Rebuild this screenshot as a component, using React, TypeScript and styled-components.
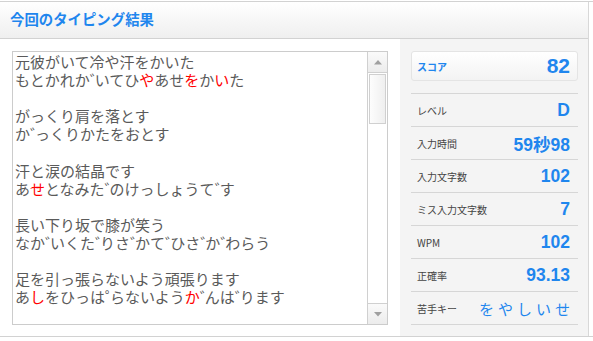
import React from "react";
import styled, { createGlobalStyle } from "styled-components";

const Global = createGlobalStyle`
  html, body { margin: 0; padding: 0; background: #fff; }
  body { font-family: "Noto Sans CJK JP", "Liberation Sans", sans-serif; }
`;

const BLUE = "#1f86ee";

const Frame = styled.div`
  margin-top: 1px;
  border-top: 1px solid #d2d2d2;
  border-bottom: 1px solid #d2d2d2;
  width: 593px;
  box-sizing: border-box;
`;

const Inner = styled.div`
  width: 589px;
  border-right: 1px solid #d8d8d8;
  box-sizing: border-box;
  display: flex;
  flex-direction: column;
`;

const Header = styled.div`
  height: 36px;
  border-bottom: 1px solid #d2d2d2;
  background: linear-gradient(#ffffff, #efefef);
  display: flex;
  align-items: center;
  padding-left: 10px;
`;

const Title = styled.h1`
  margin: 0;
  font-family: "Noto Sans CJK JP", sans-serif;
  font-size: 14.4px;
  font-weight: 700;
  color: ${BLUE};
  line-height: 1;
  padding-bottom: 1px;
`;

const Body = styled.div`
  display: flex;
  height: 297px;
`;

const Left = styled.div`
  width: 400px;
  box-sizing: border-box;
  padding: 12px 12px 11px 12px;
  background: #fff;
`;

const TextBox = styled.div`
  width: 376px;
  height: 274px;
  box-sizing: border-box;
  border: 1px solid #cccccc;
  display: flex;
`;

const TextContent = styled.div`
  flex: 1;
  overflow: hidden;
  padding: 1px 0 0 2px;
  font-family: "Noto Sans CJK JP", sans-serif;
  font-size: 15px;
  line-height: 18.1px;
  color: #5a5a5a;
  white-space: nowrap;
`;

const Line = styled.div`
  height: 18.1px;
`;

const Red = styled.span`
  color: #ff0000;
`;

const Mark = styled.span`
  letter-spacing: -10px;
  margin-right: 0;
`;

const ScrollBar = styled.div`
  width: 19px;
  border-left: 1px solid #d0d0d0;
  display: flex;
  flex-direction: column;
`;

const ScrollBtn = styled.div<{ $down?: boolean }>`
  height: 20px;
  background: linear-gradient(#fafafa, #ececec);
  ${(p) => (p.$down ? "border-top: 1px solid #d0d0d0;" : "border-bottom: 1px solid #d0d0d0;")}
  display: flex;
  align-items: center;
  justify-content: center;
`;

const Track = styled.div`
  flex: 1;
  padding: 1px 1px 0 1px;
`;

const Thumb = styled.div`
  height: 48px;
  border: 1px solid #d0d0d0;
  background: linear-gradient(90deg, #fdfdfd, #efefef);
`;

const Right = styled.div`
  width: 188px;
  box-sizing: border-box;
  background: #f4f4f4;
  padding: 12px 10px 0 11px;
  display: flex;
  flex-direction: column;
`;

const ScoreCard = styled.div`
  height: 30px;
  box-sizing: border-box;
  border: 1px solid #e4e4e4;
  border-radius: 3px;
  background: linear-gradient(#ffffff, #f3f3f3);
  display: flex;
  align-items: center;
  justify-content: space-between;
  padding: 0 7px 0 5px;
  margin-bottom: 12px;
`;

const ScoreLabel = styled.span`
  font-family: "Noto Sans CJK JP", sans-serif;
  font-size: 10px;
  font-weight: 700;
  color: ${BLUE};
`;

const ScoreValue = styled.span`
  font-family: "Liberation Sans", sans-serif;
  font-size: 21px;
  font-weight: 700;
  color: ${BLUE};
`;

const Row = styled.div<{ $last?: boolean }>`
  height: 33px;
  box-sizing: border-box;
  border-top: 1px solid #d6d6d6;
  ${(p) => (p.$last ? "border-bottom: 1px solid #d6d6d6; height: 34px;" : "")}
  display: flex;
  align-items: center;
  justify-content: space-between;
  padding: 0 8px 0 6px;
`;

const Label = styled.span`
  font-family: "Noto Sans CJK JP", "Liberation Sans", sans-serif;
  font-size: 10px;
  color: #444;
`;

const Value = styled.span`
  font-family: "Liberation Sans", "Noto Sans CJK JP", sans-serif;
  font-size: 17.5px;
  font-weight: 700;
  color: ${BLUE};
`;

const KeysValue = styled.span`
  font-family: "Noto Sans CJK JP", sans-serif;
  font-size: 15px;
  letter-spacing: 4px;
  margin-right: -4px;
  color: ${BLUE};
`;

const Tri = ({ down }: { down?: boolean }) => (
  <svg width="8" height="5" viewBox="0 0 8 5">
    <polygon points={down ? "0,0 8,0 4,4.5" : "0,4.5 8,4.5 4,0"} fill="#a0a0a0" />
  </svg>
);

function renderLine(src: string) {
  const out: React.ReactNode[] = [];
  let buf = "";
  let red = false;
  let k = 0;
  const flush = () => {
    if (buf) {
      out.push(red ? <Red key={k++}>{buf}</Red> : <React.Fragment key={k++}>{buf}</React.Fragment>);
      buf = "";
    }
  };
  for (const ch of src) {
    if (ch === "[") {
      flush();
      red = true;
    } else if (ch === "]") {
      flush();
      red = false;
    } else if (ch === "゛" || ch === "゜") {
      flush();
      out.push(<Mark key={k++}>{ch}</Mark>);
    } else {
      buf += ch;
    }
  }
  flush();
  return out;
}

const lines = [
  "元彼がいて冷や汗をかいた",
  "もとかれか゛いてひ[や]あせ[を]か[い]た",
  "",
  "がっくり肩を落とす",
  "か゛っくりかたをおとす",
  "",
  "汗と涙の結晶です",
  "あ[せ]となみた゛のけっしょうて゛す",
  "",
  "長い下り坂で膝が笑う",
  "なか゛いくた゛りさ゛かて゛ひさ゛か゛わらう",
  "",
  "足を引っ張らないよう頑張ります",
  "あ[し]をひっは゜らないよう[か]゛んは゛ります",
];

const stats: { label: string; value: string }[] = [
  { label: "レベル", value: "D" },
  { label: "入力時間", value: "59秒98" },
  { label: "入力文字数", value: "102" },
  { label: "ミス入力文字数", value: "7" },
  { label: "WPM", value: "102" },
  { label: "正確率", value: "93.13" },
];

export default function App() {
  return (
    <>
      <Global />
      <Frame>
        <Inner>
          <Header>
            <Title>今回のタイピング結果</Title>
          </Header>
          <Body>
            <Left>
              <TextBox>
                <TextContent>
                  {lines.map((l, i) => (
                    <Line key={i}>{renderLine(l)}</Line>
                  ))}
                </TextContent>
                <ScrollBar>
                  <ScrollBtn>
                    <Tri />
                  </ScrollBtn>
                  <Track>
                    <Thumb />
                  </Track>
                  <ScrollBtn $down>
                    <Tri down />
                  </ScrollBtn>
                </ScrollBar>
              </TextBox>
            </Left>
            <Right>
              <ScoreCard>
                <ScoreLabel>スコア</ScoreLabel>
                <ScoreValue>82</ScoreValue>
              </ScoreCard>
              {stats.map((s) => (
                <Row key={s.label}>
                  <Label>{s.label}</Label>
                  <Value>{s.value}</Value>
                </Row>
              ))}
              <Row $last>
                <Label>苦手キー</Label>
                <KeysValue>をやしいせ</KeysValue>
              </Row>
            </Right>
          </Body>
        </Inner>
      </Frame>
    </>
  );
}
